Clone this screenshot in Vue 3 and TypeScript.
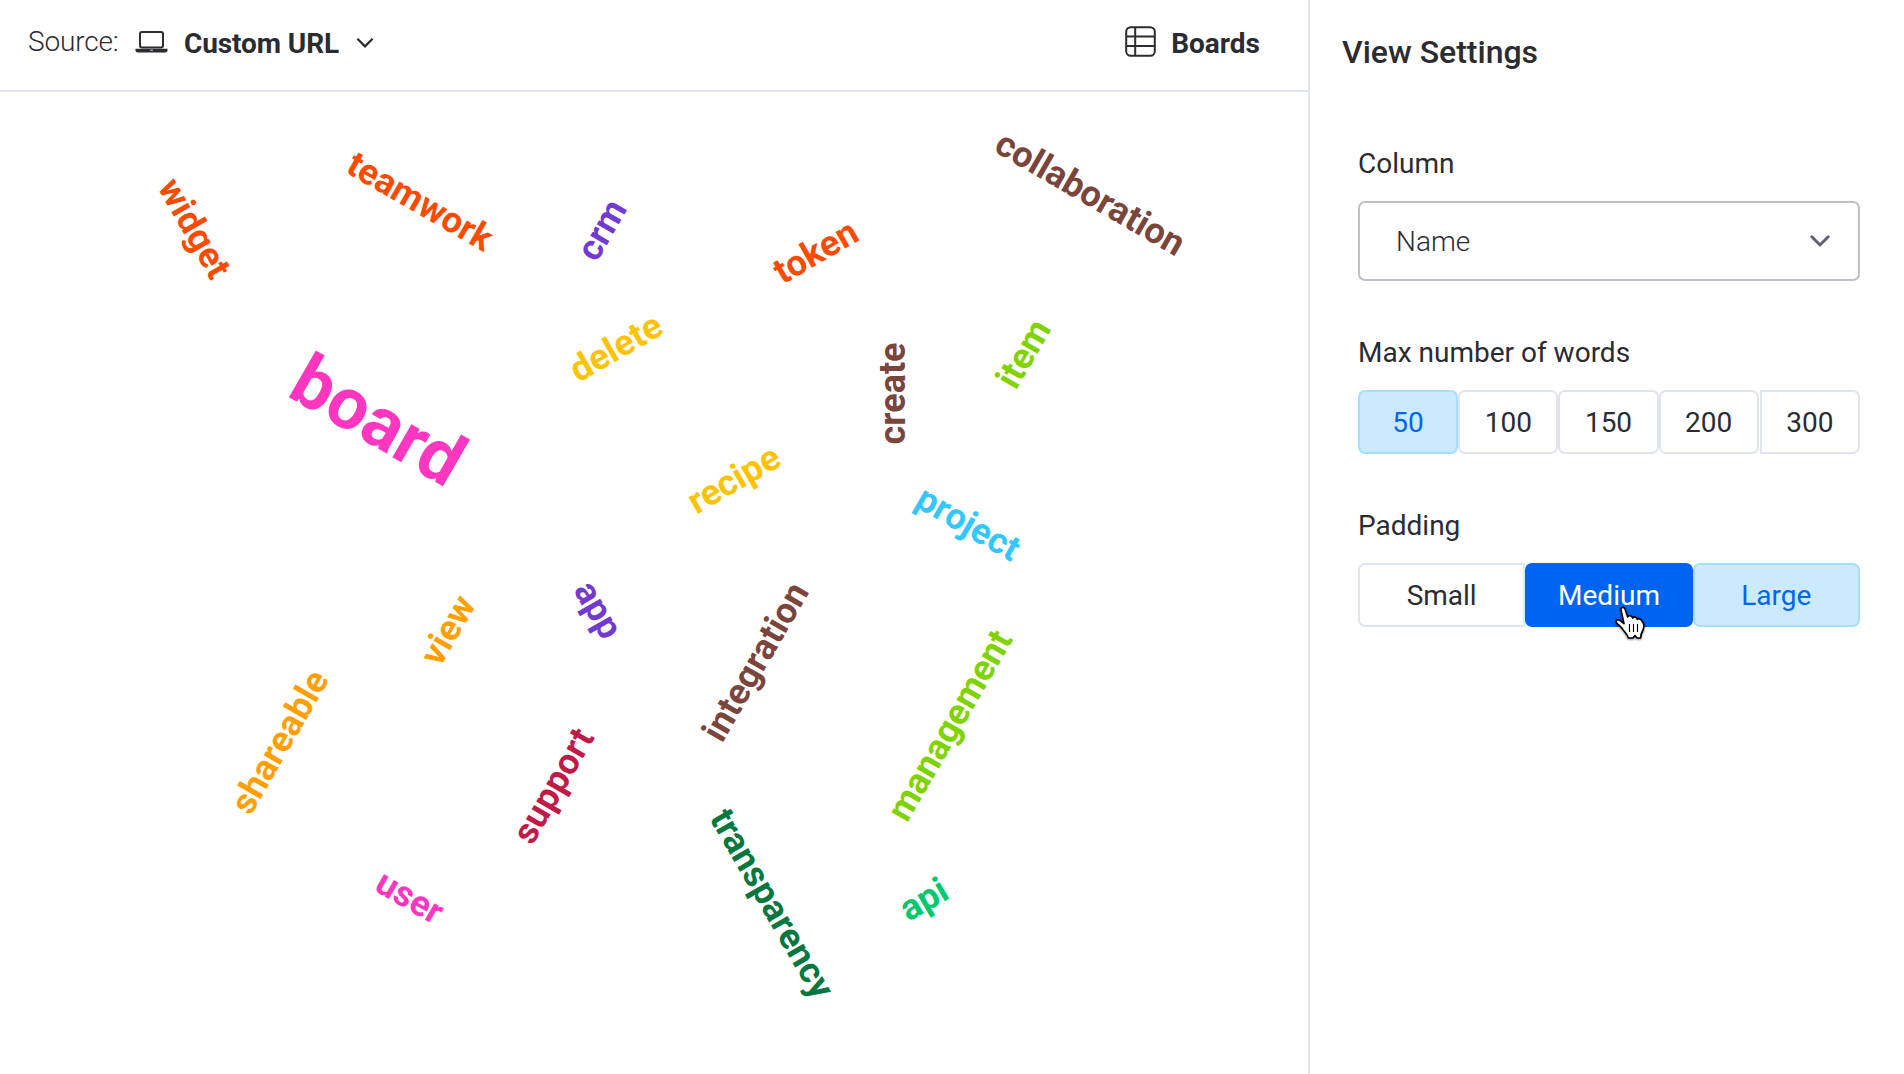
<script setup lang="ts">
import { ref } from 'vue';

interface CloudWord {
    text: string;
    x: number;
    y: number;
    rotate: number;
    color: string;
    size?: number;
}

const words: CloudWord[] = [
    { text: 'widget', x: 157, y: 95.3, rotate: 60, color: '#fb4b00' },
    { text: 'teamwork', x: 344.3, y: 79.6, rotate: 30, color: '#fb4b00' },
    { text: 'crm', x: 596.4, y: 171.2, rotate: -60, color: '#7339d0' },
    { text: 'delete', x: 578.4, y: 291, rotate: -30, color: '#fdc200' },
    { text: 'board', x: 285.4, y: 303.3, rotate: 30, color: '#ff37c0', size: 72 },
    { text: 'token', x: 782.5, y: 192.8, rotate: -30, color: '#fb4b00' },
    { text: 'collaboration', x: 992.4, y: 58.8, rotate: 30, color: '#7a463c' },
    { text: 'create', x: 904.8, y: 352.4, rotate: -90, color: '#7a463c' },
    { text: 'item', x: 1015.8, y: 299.1, rotate: -60, color: '#80d200' },
    { text: 'recipe', x: 696.4, y: 422.7, rotate: -30, color: '#fdc200' },
    { text: 'project', x: 913.4, y: 413.7, rotate: 30, color: '#34c6ff' },
    { text: 'view', x: 439.9, y: 576, rotate: -60, color: '#ff9f00' },
    { text: 'app', x: 573, y: 497.9, rotate: 60, color: '#7339d0' },
    { text: 'shareable', x: 250.4, y: 724.6, rotate: -60, color: '#ff9f00' },
    { text: 'support', x: 532.3, y: 754.2, rotate: -60, color: '#bf1a48' },
    { text: 'user', x: 373, y: 797.8, rotate: 30, color: '#ff37c0' },
    { text: 'integration', x: 721.9, y: 652, rotate: -60, color: '#7a463c' },
    { text: 'management', x: 907, y: 731.6, rotate: -60, color: '#80d200' },
    { text: 'transparency', x: 708.8, y: 725.9, rotate: 60, color: '#05773f' },
    { text: 'api', x: 908.6, y: 830.1, rotate: -30, color: '#00c86e' },
];

const wordLimits = [50, 100, 150, 200, 300];
const maxWords = ref(50);

const paddings = ['Small', 'Medium', 'Large'];
const padding = ref('Large');
const hoveredPadding = ref('Medium');
</script>

<template>
    <div class="app">
        <main class="board-view">
            <header class="toolbar">
                <div class="source">
                    <span class="source-label">Source:</span>
                    <button class="source-picker">
                        <svg class="icon-laptop" width="33" height="24" viewBox="0 0 33 24" fill="none">
                            <rect x="5" y="2" width="23" height="15.4" rx="2" stroke="currentColor" stroke-width="2" />
                            <path d="M0.5 18.8H32.5V20.2C32.5 21.6 31.6 22.4 30.2 22.4H2.8C1.4 22.4 0.5 21.6 0.5 20.2Z" fill="currentColor" />
                            <path d="M15 20.2H18" stroke="#c4c4c8" stroke-width="1" />
                        </svg>
                        <span>Custom URL</span>
                        <svg class="icon-chevron" width="18" height="12" viewBox="0 0 18 12" fill="none">
                            <path d="M1.4 1.8L9 9.4L16.6 1.8" stroke="currentColor" stroke-width="2.2" />
                        </svg>
                    </button>
                </div>
                <button class="boards">
                    <svg class="icon-table" width="31" height="31" viewBox="0 0 31 31" fill="none" stroke="currentColor" stroke-width="2">
                        <rect x="1.2" y="1.2" width="28.6" height="28.6" rx="4.5" />
                        <path d="M10.2 1V30M1 10.6H30M1 20H30" />
                    </svg>
                    <span>Boards</span>
                </button>
            </header>

            <svg class="cloud" width="1308" height="982" viewBox="0 0 1308 982">
                <text
                    v-for="word in words"
                    :key="word.text"
                    :transform="`translate(${word.x} ${word.y}) rotate(${word.rotate})`"
                    :font-size="word.size ?? 36"
                    :fill="word.color"
                >{{ word.text }}</text>
            </svg>
        </main>

        <aside class="settings">
            <h2 class="settings-title">View Settings</h2>

            <section class="field">
                <div class="field-label">Column</div>
                <div class="select">
                    <span>Name</span>
                    <svg width="22" height="14" viewBox="0 0 22 14" fill="none">
                        <path d="M2.8 2.8L11 11L19.2 2.8" stroke="#5f6072" stroke-width="3" stroke-linecap="round" />
                    </svg>
                </div>
            </section>

            <section class="field">
                <div class="field-label">Max number of words</div>
                <div class="button-group limits">
                    <button
                        v-for="limit in wordLimits"
                        :key="limit"
                        :class="{ selected: limit === maxWords }"
                        @click="maxWords = limit"
                    >
                        {{ limit }}
                    </button>
                </div>
            </section>

            <section class="field">
                <div class="field-label">Padding</div>
                <div class="button-group paddings">
                    <button
                        v-for="option in paddings"
                        :key="option"
                        :class="{ selected: option === padding, hovered: option === hoveredPadding }"
                        @click="padding = option"
                    >
                        {{ option }}
                        <svg v-if="option === hoveredPadding" class="pointer" width="40" height="42" viewBox="30 36 120 126">
                            <path
                                d="M66 63C64 54 75 52 78 60L86 84C88 78 99 79 101 87C104 82 113 84 115 91C119 87 127 90 129 97C134 101 136 106 134 116C133 126 126 132 126 139L125 147H114L108 140L102 147H88C87 138 79 133 72 122C66 113 61 110 54 103C48 96 54 89 62 94L75 104Z"
                                fill="#fff"
                                stroke="#000"
                                stroke-width="5"
                                stroke-linejoin="round"
                            />
                            <path d="M91.5 105V129M103.5 105V129M115.5 105V129" stroke="#000" stroke-width="3.4" />
                        </svg>
                    </button>
                </div>
            </section>
        </aside>
    </div>
</template>

<style>
body {
    margin: 0;
    background: #fff;
}
</style>

<style scoped>
.app {
    display: flex;
    height: 1074px;
    overflow: hidden;
    font-family: Roboto, 'Liberation Sans', sans-serif;
    font-size: 28px;
    line-height: 33px;
    color: #2b2c31;
    background: #fff;
}

button {
    margin: 0;
    padding: 0;
    border: 0;
    background: none;
    font: inherit;
    color: inherit;
    cursor: pointer;
}

.board-view {
    flex: 1;
    min-width: 0;
    display: flex;
    flex-direction: column;
}

.toolbar {
    box-sizing: border-box;
    height: 92px;
    padding: 25px 48px 0 28px;
    display: flex;
    justify-content: space-between;
    align-items: flex-start;
    border-bottom: 2px solid #e0e4ee;
}

.source {
    display: flex;
}

.source-label {
    width: 107px;
    font-weight: 350;
    letter-spacing: -0.15px;
}

.source-picker,
.boards {
    display: flex;
    align-items: flex-start;
    margin-top: 2px;
    font-weight: 700;
}

.source-picker {
    letter-spacing: -0.1px;
}

.icon-laptop {
    margin: 3px 16px 0 0;
}

.icon-chevron {
    margin: 10px 0 0 17px;
}

.icon-table {
    margin: -1px 15px 0 0;
}

.cloud {
    display: block;
    font-weight: 700;
}

.settings {
    box-sizing: border-box;
    width: 596px;
    padding: 33px 44px 0 48px;
    border-left: 2px solid #e0e4ee;
}

.settings-title {
    margin: 0 0 76px -16px;
    font-size: 32px;
    line-height: 38px;
    font-weight: 500;
}

.field {
    margin-bottom: 55px;
}

.field-label {
    margin-bottom: 21px;
    font-weight: 400;
}

.select {
    box-sizing: border-box;
    height: 80px;
    padding: 0 27px 0 36px;
    display: flex;
    align-items: center;
    justify-content: space-between;
    border: 2px solid #bfbfca;
    border-radius: 7px;
    font-weight: 350;
}

.button-group {
    display: flex;
    height: 64px;
}

.button-group button {
    position: relative;
    box-sizing: border-box;
    flex: 1;
    border: 2px solid #e0e4ee;
    border-radius: 7px;
}

.button-group button.selected {
    background: #cceafd;
    border-color: #a8def9;
    color: #0066f0;
}

.button-group button.hovered {
    background: #0064f0;
    border-color: #0064f0;
    color: #fff;
}

.limits button:last-child {
    margin-left: 1px;
    border-top-left-radius: 0;
    border-bottom-left-radius: 0;
}

.paddings button:first-child {
    border-top-right-radius: 0;
    border-bottom-right-radius: 0;
    border-right-color: #cdeefb;
}

.pointer {
    position: absolute;
    left: 82px;
    top: 36px;
    z-index: 1;
    overflow: visible;
    filter: drop-shadow(0 1px 1px rgba(0, 0, 0, 0.45));
}
</style>
